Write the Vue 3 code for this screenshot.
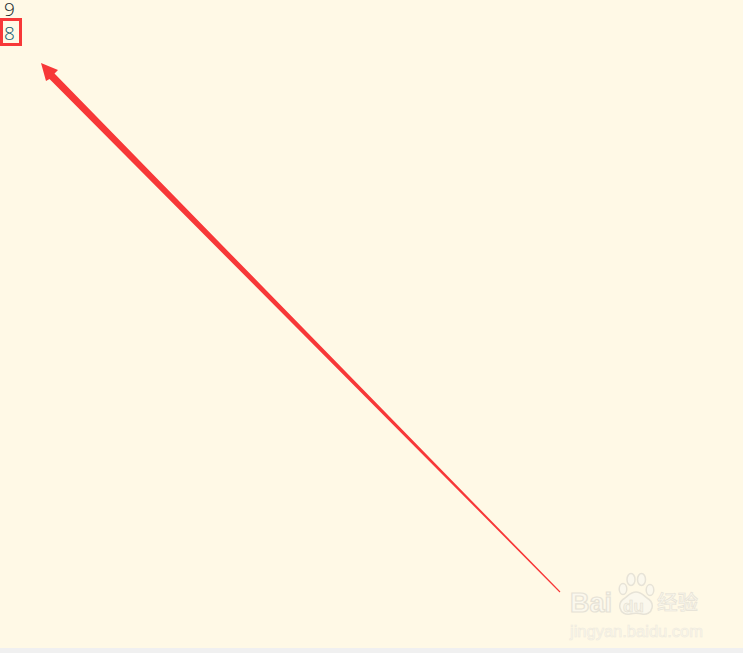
<script setup>
const digits = [
  { value: '9', cls: 'dark' },
  { value: '8', cls: 'teal' },
]
</script>

<template>
  <div class="page">
    <div class="list">
      <div v-for="d in digits" :key="d.value" class="digit" :class="d.cls">{{ d.value }}</div>
    </div>

    <svg class="annotation" width="743" height="653" viewBox="0 0 743 653">
      <rect x="1.5" y="19.5" width="19" height="25" fill="none" stroke="#f73838" stroke-width="3" />
      <polygon points="41,63 58,70 54.5,73.5 560.4,591.6 559.6,592.4 49.5,79 46,81" fill="#f73838" />
    </svg>

    <div class="mark">
      <svg class="paw" width="38" height="46" viewBox="0 0 38 46">
        <g fill="#fbf8ed" stroke="#e7e3d7" stroke-width="1.5">
          <ellipse cx="5" cy="17" rx="3.8" ry="5.5" />
          <ellipse cx="13" cy="7.5" rx="4" ry="6" />
          <ellipse cx="23.5" cy="7.5" rx="4" ry="6" />
          <ellipse cx="32" cy="18" rx="3.8" ry="5.5" />
          <path d="M18 20c5 0 7 3 11 6 5 3 6 6 5 10-1 5-6 7-10 6-4-1-8-1-12 0-4 1-9-1-10-6-1-4 0-7 5-10 4-3 6-6 11-6z" />
        </g>
      </svg>
      <div class="logo-row">
        <span class="bai">Bai</span><span class="du">du</span><span class="cn">经验</span>
      </div>
      <div class="url">jingyan.baidu.com</div>
    </div>

    <div class="foot"></div>
  </div>
</template>

<style scoped>
.page {
  position: relative;
  width: 743px;
  height: 653px;
  background: #fff9e6;
  overflow: hidden;
  display: flex;
  flex-direction: column;
}
.list {
  flex: 1;
  padding-left: 4px;
  display: flex;
  flex-direction: column;
  gap: 6px;
  font-family: "Open Sans", "Liberation Sans", sans-serif;
  font-weight: 300;
  font-size: 19px;
  line-height: 18px;
}
.digit {
  height: 18px;
}
.dark {
  color: #141f2a;
}
.teal {
  color: #125a6e;
}
.annotation {
  position: absolute;
  left: 0;
  top: 0;
}
.mark {
  position: absolute;
  left: 570px;
  top: 572px;
  width: 134px;
  height: 66px;
}
.paw {
  position: absolute;
  left: 48px;
  top: 0;
}
.logo-row {
  position: absolute;
  left: 0;
  top: 16px;
  display: flex;
  align-items: baseline;
  font-family: "Liberation Sans", "Noto Sans CJK SC", sans-serif;
  font-weight: 700;
  color: #fbf8ed;
  -webkit-text-stroke: 1.2px #e6e2d6;
}
.bai {
  font-size: 27px;
  width: 52px;
}
.du {
  position: relative;
  font-size: 17px;
  width: 35px;
  padding-left: 1px;
  box-sizing: border-box;
  color: #f6f2e6;
  -webkit-text-stroke: 0.5px #e2ddd0;
}
.cn {
  font-size: 20.5px;
  width: 42px;
  font-weight: 500;
  color: #f8f5ea;
  -webkit-text-stroke: 0.6px #e6e2d6;
  transform: translateY(-2px);
}
.url {
  position: absolute;
  left: 0;
  top: 49px;
  font-family: "Liberation Sans", sans-serif;
  font-size: 16.5px;
  line-height: 20px;
  white-space: nowrap;
  color: #fbf8ed;
  -webkit-text-stroke: 0.6px #eeeadd;
}
.foot {
  height: 5px;
  background: #f0f0f0;
}
</style>
